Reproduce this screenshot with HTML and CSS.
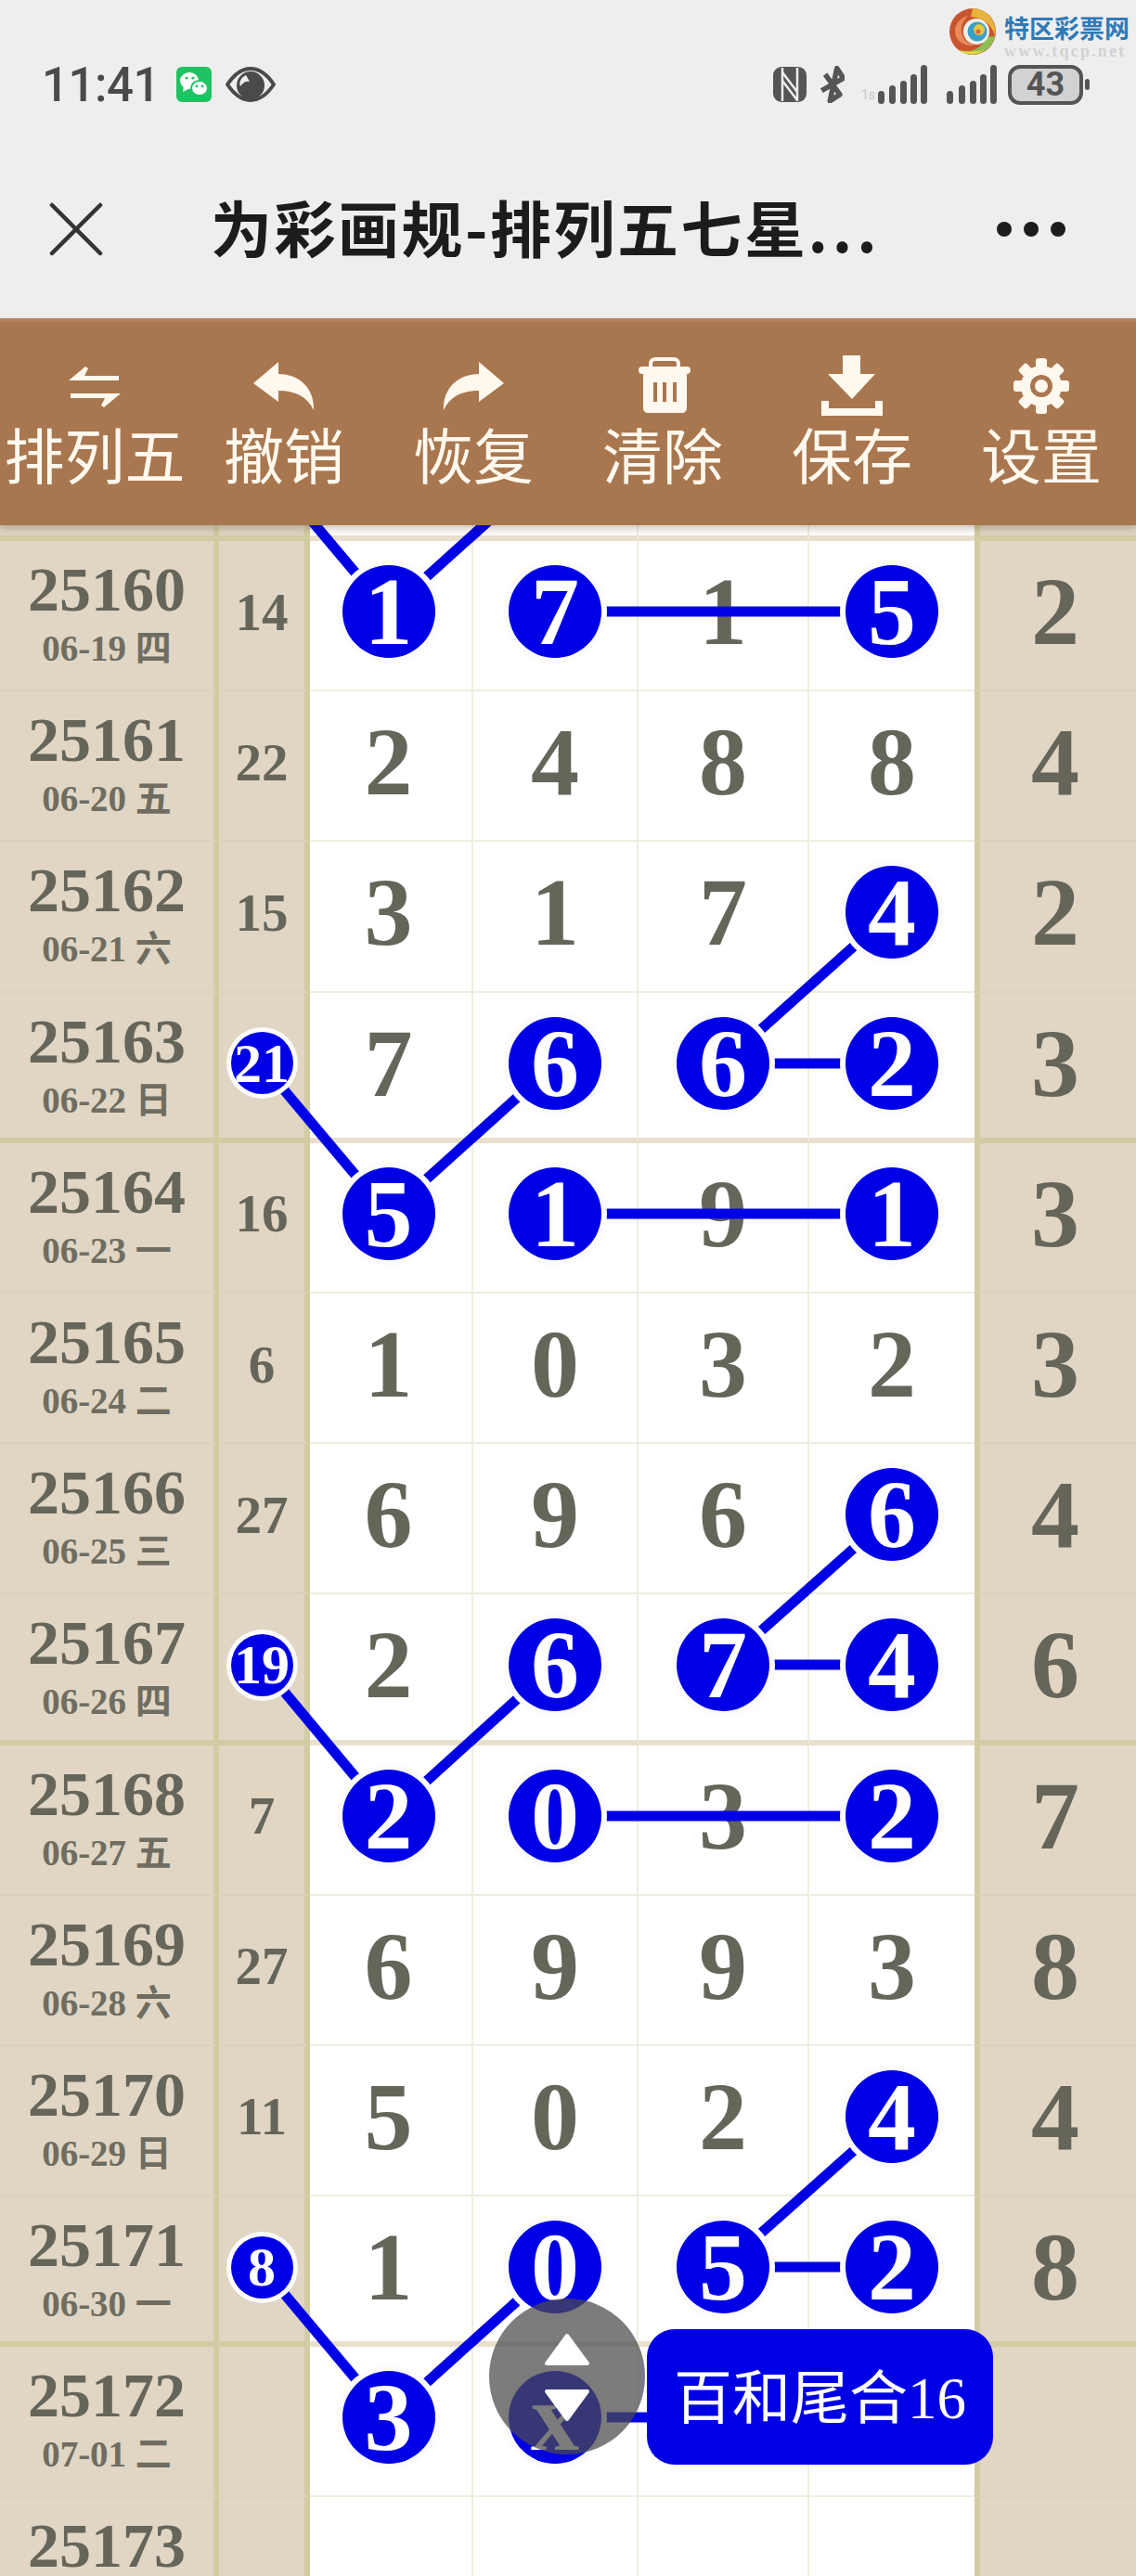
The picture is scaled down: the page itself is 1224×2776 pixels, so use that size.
FILE: index.html
```html
<!DOCTYPE html>
<html lang="zh-CN">
<head>
    <meta charset="UTF-8">
    <meta name="viewport" content="width=device-width, initial-scale=1.0">
    <title>排列五七星</title>
    <link rel="stylesheet" href="styles.css">
</head>
<body>
<div class="page">
    <!-- status bar -->
    <div class="status">
        <div class="status-left">
            <span class="clock">11:41</span>
            <svg class="wechat" viewBox="0 0 38 38">
                <rect width="38" height="38" rx="6" fill="#1fc462"/>
                <ellipse cx="14" cy="15" rx="10" ry="9" fill="#fff"/>
                <path d="M8 21l-1 6 6-3z" fill="#fff"/>
                <ellipse cx="25" cy="23" rx="9" ry="8" fill="#fff" stroke="#1fc462" stroke-width="2"/>
                <circle cx="11" cy="12" r="1.6" fill="#1fc462"/>
                <circle cx="18" cy="12" r="1.6" fill="#1fc462"/>
                <circle cx="22" cy="21" r="1.4" fill="#1fc462"/>
                <circle cx="28" cy="21" r="1.4" fill="#1fc462"/>
            </svg>
            <svg class="eye" viewBox="0 0 54 38">
                <path d="M2 19C10 7 18 2 27 2s17 5 25 17C44 31 36 36 27 36S10 31 2 19z" fill="none" stroke="#4a4a4a" stroke-width="4"/>
                <circle cx="27" cy="20" r="15" fill="#4a4a4a"/>
                <path d="M22 9c-5 2-8 8-6 12 3-5 7-6 10-5z" fill="#eee"/>
            </svg>
        </div>
        <div class="status-right">
            <svg class="nfc" viewBox="0 0 38 40">
                <rect x="1" y="1" width="36" height="38" rx="9" fill="#555"/>
                <path d="M11 2v36M27 2v36" stroke="#eee" stroke-width="2.5"/>
                <path d="M11 7l16 21M11 16l16 21" stroke="#eee" stroke-width="2.5"/>
            </svg>
            <svg class="bt" viewBox="0 0 26 40">
                <path d="M3 11l20 18-9 9V2l9 9L3 29" fill="none" stroke="#555" stroke-width="5.5" stroke-linejoin="round" transform="rotate(12 13 20)"/>
            </svg>
            <svg class="signal-a" viewBox="0 0 72 42">
                <text x="0" y="37" class="sig-tag">1s</text>
                <rect x="18" y="28" width="7" height="14" rx="3.5" fill="#555"/>
                <rect x="30" y="22" width="7" height="20" rx="3.5" fill="#555"/>
                <rect x="42" y="17" width="7" height="25" rx="3.5" fill="#555"/>
                <rect x="53" y="10" width="7" height="32" rx="3.5" fill="#555"/>
                <rect x="64" y="0" width="7" height="42" rx="3.5" fill="#555"/>
            </svg>
            <svg class="signal-b" viewBox="0 0 55 42">
                <rect x="0" y="28" width="7" height="14" rx="3.5" fill="#555"/>
                <rect x="13" y="22" width="7" height="20" rx="3.5" fill="#555"/>
                <rect x="25" y="17" width="7" height="25" rx="3.5" fill="#555"/>
                <rect x="36" y="10" width="7" height="32" rx="3.5" fill="#555"/>
                <rect x="47" y="0" width="7" height="42" rx="3.5" fill="#555"/>
            </svg>
            <div class="battery">43</div>
            <div class="battery-tip"></div>
        </div>
    </div>

    <!-- watermark of the site, sits over the status bar -->
    <div class="logo">
        <svg class="logo-mark" viewBox="0 0 50 52">
            <circle cx="25" cy="26" r="25" fill="#c9552f"/>
            <path d="M25 1a25 25 0 0 1 24 30c-3-12-12-20-26-21z" fill="#e9b23a"/>
            <path d="M49 31A25 25 0 0 1 10 46c12 4 26-2 30-14z" fill="#8cc152"/>
            <path d="M10 46c5 5 20 6 28 0-8 2-20 2-28 0z" fill="#e8d53a"/>
            <path d="M6 26c0-9 6-15 14-17-5 5-8 10-7 17 1 8 6 13 14 15-10 1-21-4-21-15z" fill="#e88a5a"/>
            <circle cx="29" cy="26" r="14" fill="#f3ede8"/>
            <circle cx="30" cy="26" r="10.5" fill="#3aa0c8"/>
            <circle cx="32" cy="24" r="6" fill="#e8c53a"/>
            <circle cx="31" cy="26" r="2.5" fill="#d9653a"/>
        </svg>
        <div class="logo-text">
            <div class="logo-name">特区彩票网</div>
            <div class="logo-url">www.tqcp.net</div>
        </div>
    </div>

    <!-- title bar -->
    <div class="titlebar">
        <svg class="close" viewBox="0 0 58 58">
            <path d="M3 3l52 52M55 3L3 55" stroke="#333" stroke-width="4.5" stroke-linecap="round"/>
        </svg>
        <div class="title">为彩画规-排列五七星<span class="title-dots">...</span></div>
        <div class="more"><i></i><i></i><i></i></div>
    </div>

    <!-- toolbar -->
    <div class="toolbar">
        <div class="tool">
            <svg viewBox="0 0 66 66"><path d="M5 27L23 12l3 2-4 8h37v5zM61 41L43 56l-3-2 4-8H7v-5z"/></svg>
            <span>排列五</span>
        </div>
        <div class="tool">
            <svg viewBox="0 0 66 66"><path d="M0 30L27 7v13c23 0 39 16 38 39-7-15-20-21-38-21v12z"/></svg>
            <span>撤销</span>
        </div>
        <div class="tool">
            <svg viewBox="0 0 66 66"><path d="M66 30L39 7v13C16 20 0 36 1 59c7-15 20-21 38-21v12z"/></svg>
            <span>恢复</span>
        </div>
        <div class="tool tool-trash">
            <svg viewBox="0 0 66 66">
                <path d="M10 20h47v36c0 4-2 6-6 6H16c-4 0-6-2-6-6z"/>
                <rect x="5" y="12" width="56" height="8" rx="4"/>
                <path d="M18 13V9c0-3 2-5 5-5h20c3 0 5 2 5 5v4" fill="none" stroke="#fff8ee" stroke-width="4"/>
                <path d="M21 29h4v21h-4zM31 29h4v21h-4zM42 29h4v21h-4z" fill="#a8774f"/>
            </svg>
            <span>清除</span>
        </div>
        <div class="tool">
            <svg viewBox="0 0 66 66">
                <path d="M23 0h19v20h16L33 47 7 20h16z"/>
                <path d="M0 49h8v8h50v-8h8v16H0z"/>
            </svg>
            <span>保存</span>
        </div>
        <div class="tool">
            <svg viewBox="0 0 66 66">
                <g>
                    <rect x="27" y="3" width="12" height="60" rx="3"/>
                    <rect x="27" y="3" width="12" height="60" rx="3" transform="rotate(45 33 33)"/>
                    <rect x="27" y="3" width="12" height="60" rx="3" transform="rotate(90 33 33)"/>
                    <rect x="27" y="3" width="12" height="60" rx="3" transform="rotate(135 33 33)"/>
                    <circle cx="33" cy="33" r="22"/>
                </g>
                <circle cx="33" cy="33" r="12" fill="#a8774f"/>
                <circle cx="33" cy="33" r="7"/>
            </svg>
            <span>设置</span>
        </div>
    </div>

    <!-- table, starts with the cut off end of the row above -->
    <div class="board">
        <div class="row row-strip thick">
            <div class="cell issue"></div><div class="cell sum"></div><div class="cell num"></div><div class="cell num"></div><div class="cell num"></div><div class="cell num num-last"></div><div class="cell tail"></div>
        </div>
        <div class="row">
            <div class="cell issue"><b>25160</b><small>06-19 四</small></div>
            <div class="cell sum">14</div>
            <div class="cell num num-first"><span class="ball">1</span></div>
            <div class="cell num"><span class="ball">7</span></div>
            <div class="cell num">1</div>
            <div class="cell num num-last"><span class="ball">5</span></div>
            <div class="cell tail">2</div>
        </div>
        <div class="row">
            <div class="cell issue"><b>25161</b><small>06-20 五</small></div>
            <div class="cell sum">22</div>
            <div class="cell num num-first">2</div>
            <div class="cell num">4</div>
            <div class="cell num">8</div>
            <div class="cell num num-last">8</div>
            <div class="cell tail">4</div>
        </div>
        <div class="row">
            <div class="cell issue"><b>25162</b><small>06-21 六</small></div>
            <div class="cell sum">15</div>
            <div class="cell num num-first">3</div>
            <div class="cell num">1</div>
            <div class="cell num">7</div>
            <div class="cell num num-last"><span class="ball">4</span></div>
            <div class="cell tail">2</div>
        </div>
        <div class="row thick">
            <div class="cell issue"><b>25163</b><small>06-22 日</small></div>
            <div class="cell sum"><span class="ball ball-small">21</span></div>
            <div class="cell num num-first">7</div>
            <div class="cell num"><span class="ball">6</span></div>
            <div class="cell num"><span class="ball">6</span></div>
            <div class="cell num num-last"><span class="ball">2</span></div>
            <div class="cell tail">3</div>
        </div>
        <div class="row">
            <div class="cell issue"><b>25164</b><small>06-23 一</small></div>
            <div class="cell sum">16</div>
            <div class="cell num num-first"><span class="ball">5</span></div>
            <div class="cell num"><span class="ball">1</span></div>
            <div class="cell num">9</div>
            <div class="cell num num-last"><span class="ball">1</span></div>
            <div class="cell tail">3</div>
        </div>
        <div class="row">
            <div class="cell issue"><b>25165</b><small>06-24 二</small></div>
            <div class="cell sum">6</div>
            <div class="cell num num-first">1</div>
            <div class="cell num">0</div>
            <div class="cell num">3</div>
            <div class="cell num num-last">2</div>
            <div class="cell tail">3</div>
        </div>
        <div class="row">
            <div class="cell issue"><b>25166</b><small>06-25 三</small></div>
            <div class="cell sum">27</div>
            <div class="cell num num-first">6</div>
            <div class="cell num">9</div>
            <div class="cell num">6</div>
            <div class="cell num num-last"><span class="ball">6</span></div>
            <div class="cell tail">4</div>
        </div>
        <div class="row thick">
            <div class="cell issue"><b>25167</b><small>06-26 四</small></div>
            <div class="cell sum"><span class="ball ball-small">19</span></div>
            <div class="cell num num-first">2</div>
            <div class="cell num"><span class="ball">6</span></div>
            <div class="cell num"><span class="ball">7</span></div>
            <div class="cell num num-last"><span class="ball">4</span></div>
            <div class="cell tail">6</div>
        </div>
        <div class="row">
            <div class="cell issue"><b>25168</b><small>06-27 五</small></div>
            <div class="cell sum">7</div>
            <div class="cell num num-first"><span class="ball">2</span></div>
            <div class="cell num"><span class="ball">0</span></div>
            <div class="cell num">3</div>
            <div class="cell num num-last"><span class="ball">2</span></div>
            <div class="cell tail">7</div>
        </div>
        <div class="row">
            <div class="cell issue"><b>25169</b><small>06-28 六</small></div>
            <div class="cell sum">27</div>
            <div class="cell num num-first">6</div>
            <div class="cell num">9</div>
            <div class="cell num">9</div>
            <div class="cell num num-last">3</div>
            <div class="cell tail">8</div>
        </div>
        <div class="row">
            <div class="cell issue"><b>25170</b><small>06-29 日</small></div>
            <div class="cell sum">11</div>
            <div class="cell num num-first">5</div>
            <div class="cell num">0</div>
            <div class="cell num">2</div>
            <div class="cell num num-last"><span class="ball">4</span></div>
            <div class="cell tail">4</div>
        </div>
        <div class="row thick">
            <div class="cell issue"><b>25171</b><small>06-30 一</small></div>
            <div class="cell sum"><span class="ball ball-small">8</span></div>
            <div class="cell num num-first">1</div>
            <div class="cell num"><span class="ball">0</span></div>
            <div class="cell num"><span class="ball">5</span></div>
            <div class="cell num num-last"><span class="ball">2</span></div>
            <div class="cell tail">8</div>
        </div>
        <div class="row">
            <div class="cell issue"><b>25172</b><small>07-01 二</small></div>
            <div class="cell sum"></div>
            <div class="cell num num-first"><span class="ball">3</span></div>
            <div class="cell num"><span class="ball">x</span></div>
            <div class="cell num"></div>
            <div class="cell num num-last"></div>
            <div class="cell tail"></div>
        </div>
        <div class="row">
            <div class="cell issue"><b>25173</b></div>
            <div class="cell sum"></div>
            <div class="cell num num-first"></div>
            <div class="cell num"></div>
            <div class="cell num"></div>
            <div class="cell num num-last"></div>
            <div class="cell tail"></div>
        </div>
    </div>

    <!-- lines between the balls, drawn under them -->
    <svg class="links" viewBox="0 0 1224 2776">
        <path d="M282 497L418 659L598 497M598 659H961"/>
        <path d="M961 983L779 1146H961M282 1146L418 1308L598 1146M598 1308H961"/>
        <path d="M961 1632L779 1794H961M282 1794L418 1957L598 1794M598 1957H961"/>
        <path d="M961 2281L779 2443H961M282 2443L418 2605L598 2443M598 2605H800"/>
    </svg>

    <div class="note">百和尾合16</div>
    <div class="fab">
        <svg viewBox="0 0 168 168">
            <path d="M84 40L106 70H62z"/>
            <path d="M84 130L106 100H62z"/>
        </svg>
    </div>
</div>
</body>
</html>
```

FILE: styles.css
```css
html, body {
    margin: 0;
    padding: 0;
}
.page {
    position: relative;
    width: 1224px;
    height: 2776px;
    overflow: hidden;
    background: #eeeeee;
    font-family: "Liberation Serif", "Noto Sans CJK SC", serif;
}

/* status bar */
.status {
    box-sizing: border-box;
    height: 140px;
    padding: 42px 50px 0 45px;
    display: flex;
    justify-content: space-between;
    align-items: center;
}
.status-left, .status-right {
    display: flex;
    align-items: center;
}
.clock {
    font-family: Roboto, sans-serif;
    font-weight: 500;
    font-size: 51px;
    letter-spacing: -0.5px;
    color: #4a4a4a;
    width: 145px;
}
.wechat {
    width: 38px;
    height: 38px;
}
.eye {
    width: 54px;
    height: 38px;
    margin-left: 15px;
}
.nfc {
    width: 38px;
    height: 40px;
}
.bt {
    width: 26px;
    height: 40px;
    margin-left: 14px;
}
.signal-a {
    width: 72px;
    height: 42px;
    margin-left: 18px;
}
.signal-b {
    width: 55px;
    height: 42px;
    margin-left: 20px;
}
.sig-tag {
    font-family: Roboto, sans-serif;
    font-size: 14px;
    fill: #c8c8c8;
}
.battery {
    box-sizing: border-box;
    width: 81px;
    height: 43px;
    margin-left: 11px;
    border: 4px solid #555;
    border-radius: 13px;
    background: #d2d2d2;
    font-family: Roboto, sans-serif;
    font-weight: 700;
    font-size: 36px;
    line-height: 35px;
    text-align: center;
    color: #555;
}
.battery-tip {
    width: 5px;
    height: 12px;
    margin-left: 2px;
    border-radius: 3px;
    background: #555;
}

/* site watermark */
.logo {
    position: absolute;
    top: 8px;
    left: 1023px;
    display: flex;
    gap: 9px;
}
.logo-mark {
    width: 50px;
    height: 52px;
}
.logo-name {
    margin-top: 6px;
    font-family: "Noto Sans CJK SC", sans-serif;
    font-weight: 700;
    font-size: 27px;
    line-height: 32px;
    color: #2f7ab6;
}
.logo-url {
    font-family: "Liberation Serif", serif;
    font-weight: 700;
    font-size: 18px;
    line-height: 18px;
    letter-spacing: 2.2px;
    color: #d2d2d2;
    white-space: nowrap;
}

/* title bar */
.titlebar {
    box-sizing: border-box;
    height: 203px;
    padding: 10px 76px 0 53px;
    display: flex;
    align-items: center;
}
.close {
    width: 58px;
    height: 58px;
}
.title {
    flex: 1;
    margin: -8px 0 0 116px;
    font-family: "Noto Sans CJK SC", sans-serif;
    font-weight: 700;
    font-size: 66px;
    letter-spacing: 2.5px;
    color: #1c1c1c;
    white-space: nowrap;
}
.title-dots {
    letter-spacing: 5px;
}
.more {
    display: flex;
    gap: 13px;
}
.more i {
    width: 16px;
    height: 16px;
    border-radius: 50%;
    background: #1c1c1c;
}

/* toolbar */
.toolbar {
    position: relative;
    z-index: 3;
    box-sizing: border-box;
    height: 223px;
    padding-top: 36px;
    display: grid;
    grid-template-columns: repeat(6, 204px);
    background: #a8774f;
    border-top: 4px solid #b4805a;
    box-shadow: 0 4px 8px rgba(60, 40, 20, 0.25);
}
.tool {
    display: flex;
    flex-direction: column;
    align-items: center;
    color: #fff8ee;
}
.tool svg {
    width: 66px;
    height: 66px;
    fill: #fff8ee;
    overflow: visible;
}
.tool-trash svg {
    margin-left: 4px;
}
.tool span {
    margin-top: 3px;
    font-family: "Noto Sans CJK SC", sans-serif;
    font-size: 65px;
    line-height: 72px;
    white-space: nowrap;
}

/* table */
.board {
    background: #fff;
}
.row {
    height: 162.2px;
    display: grid;
    grid-template-columns: 236px 98px 176px 178px 184px 178px 174px;
}
.row-strip {
    height: 17px;
}
.cell {
    box-sizing: border-box;
    display: flex;
    align-items: center;
    justify-content: center;
    padding-bottom: 8px;
    border-bottom: 2px solid #d9d3ba;
    font-weight: 700;
    line-height: 1;
    color: #66655a;
}
.issue, .sum, .tail {
    background: #e0d6c3;
}
.issue {
    flex-direction: column;
    justify-content: flex-start;
    padding: 20px 0 0;
    border-right: 6px solid #d2cca4;
}
.issue b {
    font-size: 68px;
    line-height: 64px;
}
.issue small {
    font-size: 39px;
    line-height: 64px;
    color: #6f6d61;
}
.sum {
    border-right: 6px solid #d2cca4;
    font-size: 57px;
}
.num {
    border-right: 2px solid #eeeee0;
    border-bottom-color: #eeeee0;
    background: #fff;
    font-size: 104px;
}
.num-first {
    padding-right: 5px;
}
.num-last {
    border-right: 0;
}
.tail {
    padding-right: 6px;
    border-left: 6px solid #d2cca4;
    font-size: 104px;
}
.thick .cell {
    padding-bottom: 4px;
    border-bottom: 6px solid #d2cca4;
}
.thick .issue {
    padding-bottom: 0;
}
.thick .num {
    border-bottom-color: #e9dfcd;
}
.row-strip .cell, .row-strip .issue {
    padding: 0;
}

/* balls and their lines */
.ball {
    position: relative;
    z-index: 2;
    width: 100px;
    height: 100px;
    display: flex;
    align-items: center;
    justify-content: center;
    border-radius: 50%;
    background: #0000e6;
    box-shadow: 0 0 0 6px #fbfbfb;
    font-size: 104px;
    color: #fff;
}
.ball-small {
    width: 67px;
    height: 67px;
    box-shadow: 0 0 0 5px #fbfbfb;
    font-size: 60px;
}
.links {
    position: absolute;
    top: 0;
    left: 0;
    z-index: 1;
    width: 1224px;
    height: 2776px;
}
.links path {
    fill: none;
    stroke: #0000e6;
    stroke-width: 11;
}
.note {
    position: absolute;
    top: 2510px;
    left: 697px;
    z-index: 3;
    box-sizing: border-box;
    width: 373px;
    height: 146px;
    padding-bottom: 10px;
    display: flex;
    align-items: center;
    justify-content: center;
    border-radius: 30px;
    background: #0000e6;
    font-size: 63px;
    color: #fff;
}
.fab {
    position: absolute;
    top: 2477px;
    left: 527px;
    z-index: 4;
    width: 168px;
    height: 168px;
    border-radius: 50%;
    background: rgba(75, 75, 75, 0.73);
}
.fab svg {
    display: block;
    width: 168px;
    height: 168px;
    fill: #fff;
    stroke: #fff;
    stroke-width: 4;
    stroke-linejoin: round;
}
```
